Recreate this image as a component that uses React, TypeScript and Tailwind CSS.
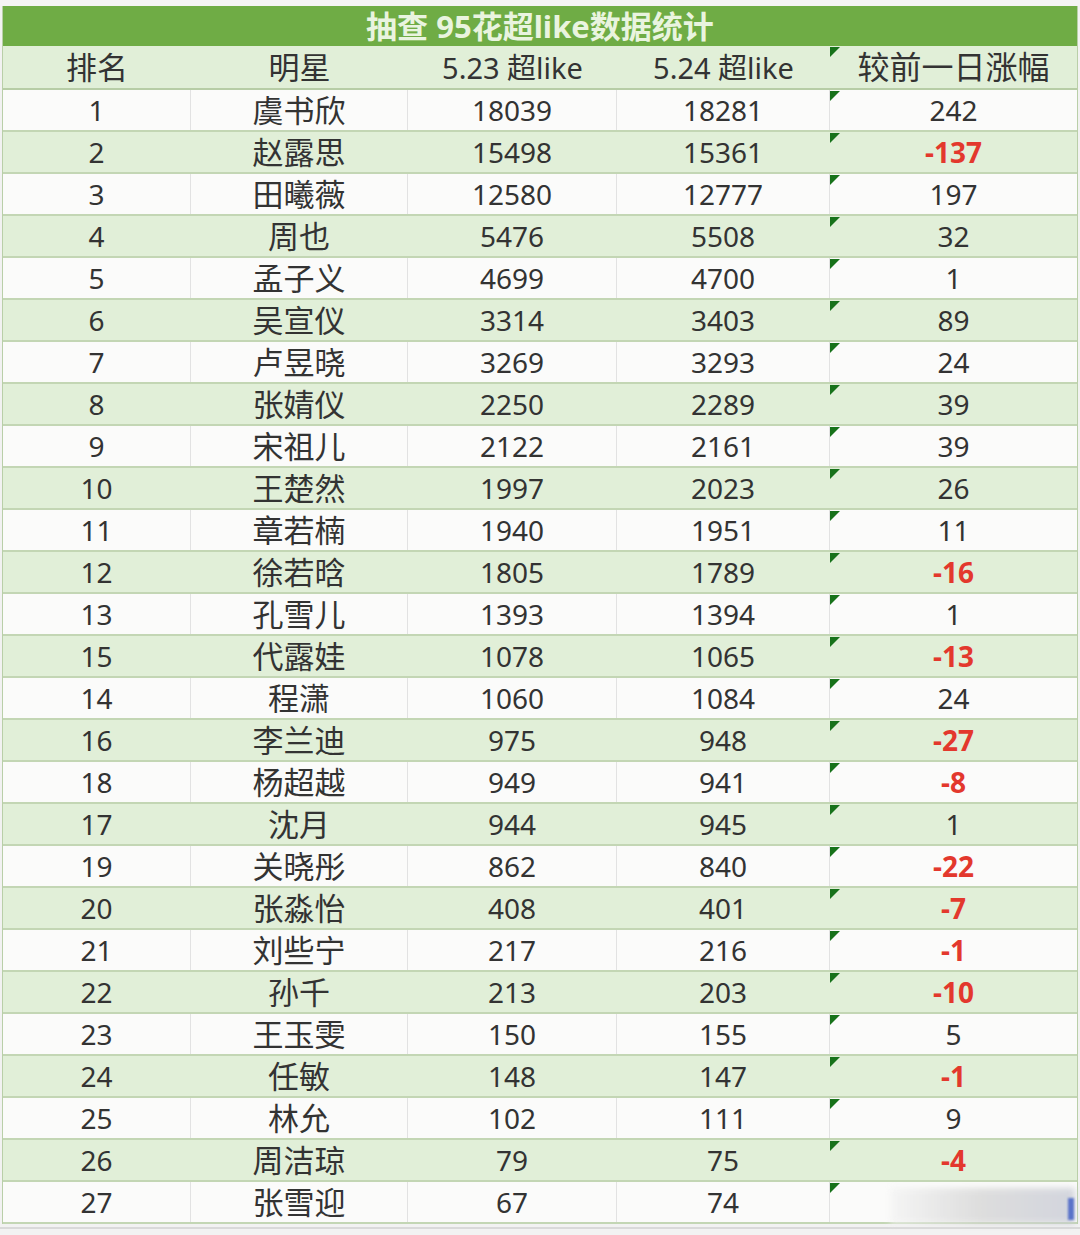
const ROWS: [string, string, string, string, string][] = [
  ['1', '虞书欣', '18039', '18281', '242'],
  ['2', '赵露思', '15498', '15361', '-137'],
  ['3', '田曦薇', '12580', '12777', '197'],
  ['4', '周也', '5476', '5508', '32'],
  ['5', '孟子义', '4699', '4700', '1'],
  ['6', '吴宣仪', '3314', '3403', '89'],
  ['7', '卢昱晓', '3269', '3293', '24'],
  ['8', '张婧仪', '2250', '2289', '39'],
  ['9', '宋祖儿', '2122', '2161', '39'],
  ['10', '王楚然', '1997', '2023', '26'],
  ['11', '章若楠', '1940', '1951', '11'],
  ['12', '徐若晗', '1805', '1789', '-16'],
  ['13', '孔雪儿', '1393', '1394', '1'],
  ['15', '代露娃', '1078', '1065', '-13'],
  ['14', '程潇', '1060', '1084', '24'],
  ['16', '李兰迪', '975', '948', '-27'],
  ['18', '杨超越', '949', '941', '-8'],
  ['17', '沈月', '944', '945', '1'],
  ['19', '关晓彤', '862', '840', '-22'],
  ['20', '张淼怡', '408', '401', '-7'],
  ['21', '刘些宁', '217', '216', '-1'],
  ['22', '孙千', '213', '203', '-10'],
  ['23', '王玉雯', '150', '155', '5'],
  ['24', '任敏', '148', '147', '-1'],
  ['25', '林允', '102', '111', '9'],
  ['26', '周洁琼', '79', '75', '-4'],
  ['27', '张雪迎', '67', '74', ''],
];

const GRID = 'grid grid-cols-[188px_217px_209px_213px_1fr]';

function Flag() {
  return (
    <svg className="absolute left-0 top-[1px]" width="10" height="10" viewBox="0 0 10 10">
      <polygon points="0,0 10,0 0,10" fill="#17721a" />
    </svg>
  );
}

export default function App() {
  return (
    <div
      className="w-[1080px] h-[1235px] bg-[#f2f2f2] text-[#333333] overflow-hidden relative"
      style={{ fontFamily: '"Noto Sans", "Noto Sans CJK SC", sans-serif' }}
    >
      <div className="h-[6px] bg-[#f4f4f4]" />
      <div className="mx-[2px] border-x border-[#b9cfa8]">
        <div className="h-[40px] bg-[#6fac45] flex items-center justify-center text-[31px] font-bold text-[#e9f4df] leading-none">
          抽查 95花超like数据统计
        </div>
        <div className={`${GRID} h-[44px] bg-[#e1efd8] border-b-2 border-[#b7cda6] leading-none`}>
          <div className="flex items-center justify-center text-[31px]">排名</div>
          <div className="flex items-center justify-center text-[31px]">明星</div>
          <div className="flex items-center justify-center text-[29px]">5.23 超like</div>
          <div className="flex items-center justify-center text-[29px]">5.24 超like</div>
          <div className="relative flex items-center justify-center text-[32px]">
            <Flag />
            较前一日涨幅
          </div>
        </div>
        {ROWS.map((r, i) => {
          const green = i % 2 === 1;
          const neg = r[4].startsWith('-');
          const line = green ? 'border-transparent' : 'border-[#e2e2e2]';
          return (
            <div
              key={r[0] + r[1]}
              className={`${GRID} h-[42px] border-b-2 border-[#c3d6b4] text-[28px] leading-none ${
                green ? 'bg-[#e1efd8]' : 'bg-[#fbfbfa]'
              }`}
            >
              <div className={`flex items-center justify-center border-r ${line}`}>{r[0]}</div>
              <div className={`flex items-center justify-center border-r text-[31px] ${line}`}>{r[1]}</div>
              <div className={`flex items-center justify-center border-r ${line}`}>{r[2]}</div>
              <div className={`flex items-center justify-center border-r ${line}`}>{r[3]}</div>
              <div
                className={`relative flex items-center justify-center ${
                  neg ? 'text-[#e3382d] font-bold' : ''
                }`}
              >
                <Flag />
                {r[4]}
              </div>
            </div>
          );
        })}
      </div>
      <div className="h-[2px] bg-[#d9d9d9] mt-[3px]" />
      <div className="absolute left-[890px] top-[1188px] w-[185px] h-[36px] bg-gradient-to-r from-[#f4f4f4] via-[#d6d6d6] to-[#c9ccd6] blur-[3px] opacity-80" />
      <div className="absolute left-[1068px] top-[1198px] w-[6px] h-[22px] bg-[#5a73c9] blur-[1px]" />
    </div>
  );
}
